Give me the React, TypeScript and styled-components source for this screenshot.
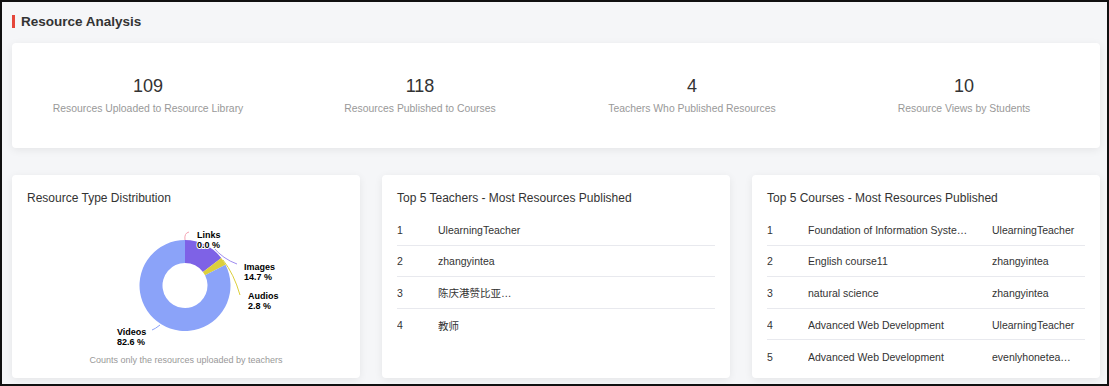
import React from 'react';
import styled, { createGlobalStyle } from 'styled-components';

const GlobalStyle = createGlobalStyle`
  body {
    margin: 0;
    font-family: "Liberation Sans", Arial, "Noto Sans CJK SC", sans-serif;
    color: #333;
  }
`;

type Stat = { value: number; label: string };

const stats: Stat[] = [
  { value: 109, label: 'Resources Uploaded to Resource Library' },
  { value: 118, label: 'Resources Published to Courses' },
  { value: 4, label: 'Teachers Who Published Resources' },
  { value: 10, label: 'Resource Views by Students' },
];

const teachers = ['UlearningTeacher', 'zhangyintea', '陈庆港赞比亚…', '教师'];

const courses = [
  { name: 'Foundation of Information Systems', teacher: 'UlearningTeacher' },
  { name: 'English course11', teacher: 'zhangyintea' },
  { name: 'natural science', teacher: 'zhangyintea' },
  { name: 'Advanced Web Development', teacher: 'UlearningTeacher' },
  { name: 'Advanced Web Development', teacher: 'evenlyhoneteacher' },
];

// donut slices, clockwise from 12 o'clock
const slices = [
  { pct: 0, color: '#f6a5b4' },
  { pct: 14.7, color: '#7e62e6' },
  { pct: 2.8, color: '#dccf3c' },
  { pct: 82.6, color: '#8ba3f9' },
];

const CX = 158;
const CY = 71.5;
const R = 45.5;
const RI = 22.5;

const polar = (r: number, deg: number) => {
  const a = ((deg - 90) * Math.PI) / 180;
  return [CX + r * Math.cos(a), CY + r * Math.sin(a)];
};

const arcPath = (from: number, to: number) => {
  const large = to - from > 180 ? 1 : 0;
  const [x1, y1] = polar(R, from);
  const [x2, y2] = polar(R, to);
  const [x3, y3] = polar(RI, to);
  const [x4, y4] = polar(RI, from);
  return `M${x1} ${y1} A${R} ${R} 0 ${large} 1 ${x2} ${y2} L${x3} ${y3} A${RI} ${RI} 0 ${large} 0 ${x4} ${y4} Z`;
};

const DonutChart = () => {
  let start = 0;
  const arcs = slices
    .filter(s => s.pct > 0)
    .map(s => {
      const from = start;
      const to = start + (s.pct / 100) * 360;
      start = to;
      return <path key={s.color} d={arcPath(from, Math.min(to, 359.99))} fill={s.color} />;
    });
  return (
    <ChartSvg viewBox="0 0 318 140" width={318} height={140}>
      {arcs}
      <g fill="none" strokeWidth={1}>
        <path d="M158 26 Q157 19 162 18" stroke="#f6a5b4" />
        <path d="M186 33 Q196 45 210 50" stroke="#9f8cf0" />
        <path d="M196 46 Q207 60 213 81" stroke="#dccf3c" />
        <path d="M133 111 Q128 115 125 116" stroke="#8ba3f9" />
      </g>
      <ChartLabel x={170} y={24}>Links</ChartLabel>
      <ChartLabel x={170} y={34}>0.0 %</ChartLabel>
      <ChartLabel x={217} y={56}>Images</ChartLabel>
      <ChartLabel x={217} y={66}>14.7 %</ChartLabel>
      <ChartLabel x={221} y={85}>Audios</ChartLabel>
      <ChartLabel x={221} y={95}>2.8 %</ChartLabel>
      <ChartLabel x={90} y={121}>Videos</ChartLabel>
      <ChartLabel x={90} y={131}>82.6 %</ChartLabel>
    </ChartSvg>
  );
};

const App = () => (
  <Frame>
    <GlobalStyle />
    <Header>
      <Marker />
      <Title>Resource Analysis</Title>
    </Header>
    <StatsCard>
      {stats.map(s => (
        <StatItem key={s.label}>
          <StatValue>{s.value}</StatValue>
          <StatLabel>{s.label}</StatLabel>
        </StatItem>
      ))}
    </StatsCard>
    <CardGrid>
      <Card>
        <CardTitle>Resource Type Distribution</CardTitle>
        <DonutChart />
        <Note>Counts only the resources uploaded by teachers</Note>
      </Card>
      <Card>
        <CardTitle>Top 5 Teachers - Most Resources Published</CardTitle>
        <List>
          {teachers.map((t, i) => (
            <Row key={t} cols="41px 1fr">
              <Cell>{i + 1}</Cell>
              <Cell>{t}</Cell>
            </Row>
          ))}
        </List>
      </Card>
      <Card>
        <CardTitle>Top 5 Courses - Most Resources Published</CardTitle>
        <List>
          {courses.map((c, i) => (
            <Row key={i} cols="41px 184px 1fr">
              <Cell>{i + 1}</Cell>
              <Cell pr={24}>{c.name}</Cell>
              <Cell pr={10}>{c.teacher}</Cell>
            </Row>
          ))}
        </List>
      </Card>
    </CardGrid>
  </Frame>
);

const Frame = styled.div`
  box-sizing: border-box;
  width: 1109px;
  height: 386px;
  border: 2px solid #111;
  background: #f5f6f8;
  padding: 0 7px 0 10px;
  overflow: hidden;
`;

const Header = styled.div`
  display: flex;
  align-items: center;
  gap: 6px;
  height: 39px;
  margin-bottom: 2px;
`;

const Marker = styled.span`
  width: 3px;
  height: 13px;
  background: #e5473b;
`;

const Title = styled.h1`
  margin: 0;
  font-size: 13.5px;
  font-weight: bold;
  color: #333;
`;

const StatsCard = styled.div`
  display: grid;
  grid-template-columns: repeat(4, 1fr);
  height: 105px;
  background: #fff;
  border-radius: 4px;
  box-shadow: 0 2px 8px rgba(0, 0, 0, 0.07);
`;

const StatItem = styled.div`
  display: flex;
  flex-direction: column;
  align-items: center;
  justify-content: center;
  gap: 6px;
  padding-top: 1px;
`;

const StatValue = styled.div`
  font-size: 18px;
  line-height: 20px;
  color: #333;
`;

const StatLabel = styled.div`
  font-size: 10.4px;
  line-height: 14px;
  color: #999;
`;

const CardGrid = styled.div`
  display: grid;
  grid-template-columns: repeat(3, 1fr);
  gap: 22px;
  margin-top: 27px;
`;

const Card = styled.div`
  box-sizing: border-box;
  height: 203px;
  padding: 15px 15px 0;
  background: #fff;
  border-radius: 4px;
  box-shadow: 0 2px 8px rgba(0, 0, 0, 0.07);
`;

const CardTitle = styled.div`
  font-size: 12px;
  line-height: 16px;
  color: #333;
  margin-bottom: 8px;
`;

const ChartSvg = styled.svg`
  display: block;
`;

const ChartLabel = styled.text`
  font-family: "Liberation Sans", Arial, sans-serif;
  font-size: 9px;
  font-weight: bold;
  fill: #000;
  stroke: #fff;
  stroke-width: 2px;
  paint-order: stroke;
`;

const Note = styled.div`
  text-align: center;
  font-size: 9px;
  line-height: 12px;
  color: #999;
`;

const List = styled.div`
  display: flex;
  flex-direction: column;
`;

const Row = styled.div<{ cols: string }>`
  display: grid;
  grid-template-columns: ${p => p.cols};
  align-items: center;
  box-sizing: border-box;
  height: 31.6px;
  padding-top: 1px;
  font-size: 10.5px;
  color: #333;
  border-bottom: 1px solid #e8e9ee;
  &:last-child {
    border-bottom: none;
  }
`;

const Cell = styled.div<{ pr?: number }>`
  min-width: 0;
  padding-right: ${p => p.pr ?? 0}px;
  white-space: nowrap;
  overflow: hidden;
  text-overflow: ellipsis;
`;

export default App;
